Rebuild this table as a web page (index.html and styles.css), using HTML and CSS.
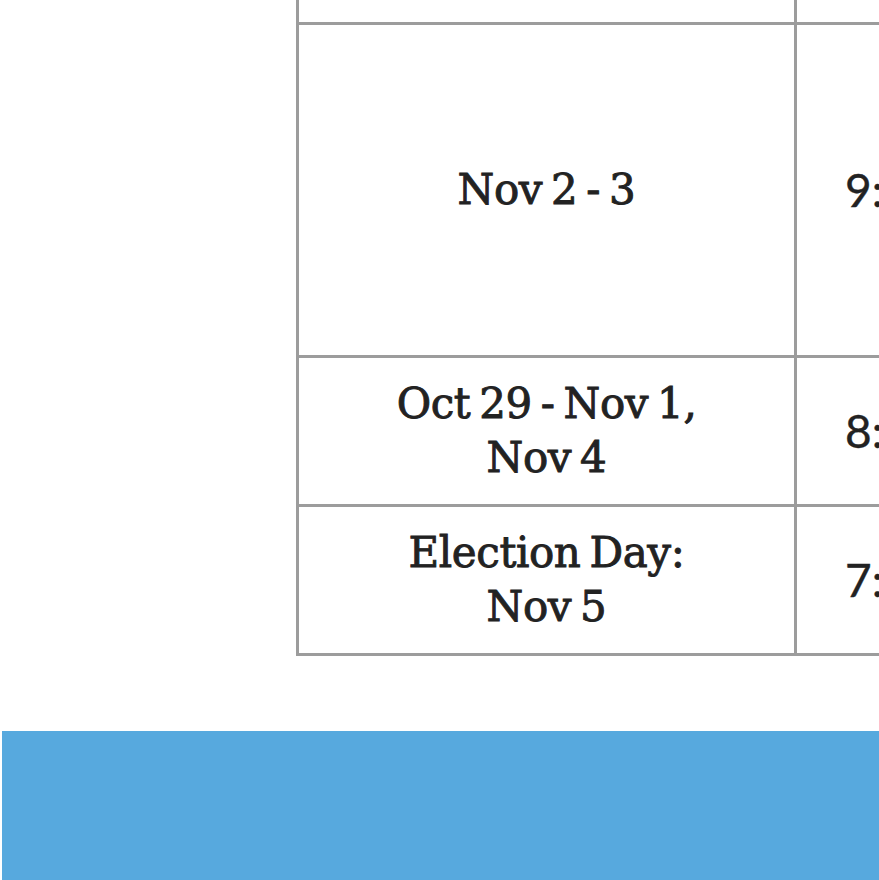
FILE: index.html
```html
<!DOCTYPE html>
<html lang="en">
<head>
<meta charset="utf-8">
<title>Early voting hours</title>
<link rel="stylesheet" href="styles.css">
</head>
<body>
<div class="page">
  <table class="hours">
    <tbody>
      <tr class="row-top">
        <td class="dates"></td>
        <td class="times"></td>
      </tr>
      <tr class="row-tall">
        <td class="dates">Nov 2 - 3</td>
        <td class="times">9:00 am - 5:00 pm</td>
      </tr>
      <tr class="row">
        <td class="dates">Oct 29 - Nov 1,<br>Nov 4</td>
        <td class="times">8:00 am - 7:00 pm</td>
      </tr>
      <tr class="row">
        <td class="dates">Election Day:<br>Nov 5</td>
        <td class="times">7:00 am - 8:00 pm</td>
      </tr>
    </tbody>
  </table>
  <div class="band"></div>
</div>
</body>
</html>
```
FILE: styles.css
```css
html, body {
  margin: 0;
  padding: 0;
  background: #ffffff;
  overflow: hidden;
}

.page {
  width: 879px;
  height: 880px;
  overflow: hidden;
}

.hours {
  border-collapse: collapse;
  margin-left: 296px;
  width: 900px;
  table-layout: fixed;
  color: #222222;
}

.hours td {
  border: 3px solid #9c9c9c;
  padding: 19px 0;
  vertical-align: middle;
  line-height: 54px;
}

.hours .dates {
  width: 495px;
  text-align: center;
  font-family: "DejaVu Serif", serif;
  font-size: 42px;
  letter-spacing: -0.4px;
  word-spacing: -4px;
  -webkit-text-stroke: 0.9px #222222;
}

.hours .times {
  text-align: left;
  padding-left: 48px;
  white-space: nowrap;
  font-family: "Lato", "Open Sans", sans-serif;
  font-size: 46px;
  -webkit-text-stroke: 0.4px #222222;
}

.row-top td {
  border-top: 0;
  height: 22px;
  padding: 0;
  line-height: 22px;
}

.row-tall td {
  height: 330px;
  padding: 0;
}

.row td {
  height: 108px;
}

.band {
  margin-top: 75px;
  margin-left: 2px;
  height: 150px;
  background: #57a9de;
}
```
